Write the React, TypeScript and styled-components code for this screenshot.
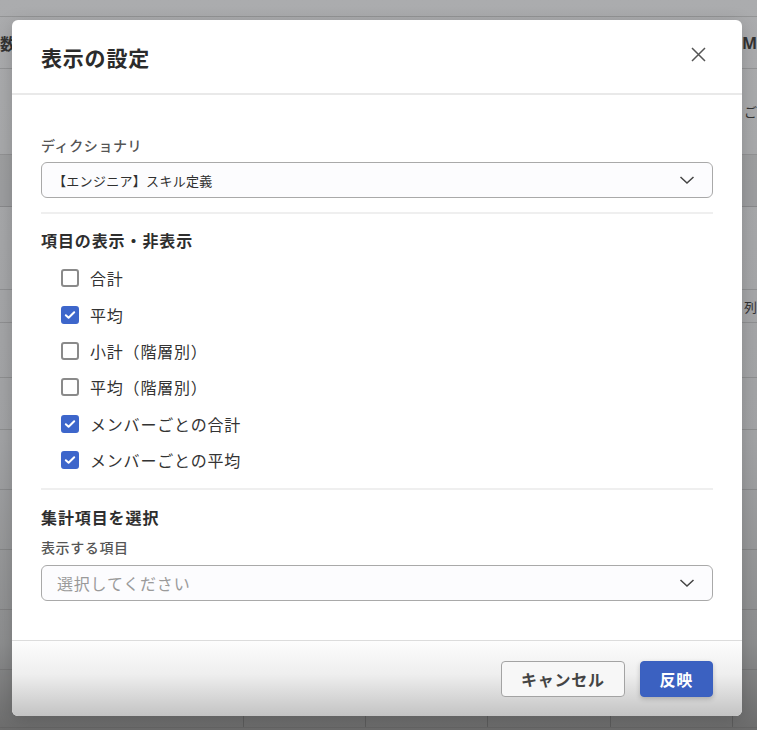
import styled, { createGlobalStyle } from "styled-components";

const GlobalStyle = createGlobalStyle`
  html, body {
    margin: 0;
    padding: 0;
  }
  body {
    font-family: "Noto Sans", "Noto Sans CJK JP", sans-serif;
    color: #333;
  }
`;

const Page = styled.div`
  position: relative;
  width: 757px;
  height: 730px;
  overflow: hidden;
  background: linear-gradient(#abacae 0%, #a2a3a5 60%, #8d8e8f 88%, #6c6c6c 100%);
`;

const BgTable = styled.div`
  display: flex;
  flex-direction: column;
`;

const BgRow = styled.div<{ $h: number; $dark?: boolean }>`
  height: ${(p) => p.$h}px;
  box-sizing: border-box;
  border-bottom: 1px solid rgba(80, 80, 80, 0.25);
  background: ${(p) => (p.$dark ? "rgba(0,0,0,0.06)" : "transparent")};
  display: flex;
  align-items: center;
  justify-content: space-between;
`;

const BgCell = styled.div<{ $w: number }>`
  width: ${(p) => p.$w}px;
  height: 100%;
  box-sizing: border-box;
  border-right: 1px solid rgba(60, 60, 60, 0.35);
`;

const BgText = styled.span<{ $small?: boolean }>`
  font-size: ${(p) => (p.$small ? 13 : 16)}px;
  font-weight: ${(p) => (p.$small ? 400 : 700)};
  white-space: nowrap;
  overflow: hidden;
  color: #333;
`;

const Overlay = styled.div`
  position: absolute;
  inset: 0;
  padding: 20px 0 0 12px;
`;

const Modal = styled.div`
  width: 730px;
  background: #fff;
  border-radius: 6px;
  overflow: hidden;
  box-shadow: 0 4px 18px rgba(0, 0, 0, 0.18);
`;

const Header = styled.div`
  height: 73px;
  padding: 0 29px;
  display: flex;
  align-items: center;
  justify-content: space-between;
  border-bottom: 2px solid #e9e9e9;
`;

const Title = styled.h2`
  margin: 0;
  font-size: 21px;
  font-weight: 700;
  color: #2b2b2b;
  letter-spacing: 0.8px;
`;

const CloseButton = styled.button`
  border: none;
  background: none;
  padding: 0;
  margin-right: 7px;
  width: 16px;
  height: 16px;
  display: flex;
  align-items: center;
  justify-content: center;
  margin-top: -4px;
`;

const Body = styled.div`
  padding: 41px 29px 39px;
`;

const FieldLabel = styled.div`
  font-size: 14px;
  line-height: 20px;
  font-weight: 500;
  color: #555;
  letter-spacing: 0.6px;
`;

const Select = styled.div<{ $placeholder?: boolean }>`
  margin-top: ${(p) => (p.$placeholder ? 7 : 6)}px;
  height: 36px;
  box-sizing: border-box;
  border: 1px solid #a9a9a9;
  border-radius: 6px;
  background: #fcfcfe;
  display: flex;
  align-items: center;
  justify-content: space-between;
  padding: 0 17px 0 ${(p) => (p.$placeholder ? 15 : 11)}px;
  font-size: ${(p) => (p.$placeholder ? 16 : 13)}px;
  letter-spacing: ${(p) => (p.$placeholder ? 0.8 : 0.3)}px;
  color: ${(p) => (p.$placeholder ? "#9a9a9a" : "#2f2f2f")};
`;

const Divider = styled.hr`
  border: none;
  height: 2px;
  background: #efefef;
  margin: 14px 0 15px;
`;

const SectionTitle = styled.h3<{ $gap: number }>`
  margin: 0 0 ${(p) => p.$gap}px;
  font-size: 16px;
  line-height: 24px;
  font-weight: 700;
  color: #2e2e2e;
  letter-spacing: 0.9px;
`;

const CheckList = styled.div`
  display: flex;
  flex-direction: column;
  padding-left: 20px;
`;

const CheckRow = styled.label`
  height: 36.4px;
  display: flex;
  align-items: center;
  gap: 11px;
  font-size: 16px;
  color: #333;
  letter-spacing: 0.8px;
`;

const Box = styled.span<{ $checked: boolean }>`
  width: 18px;
  height: 18px;
  box-sizing: border-box;
  border-radius: 3px;
  border: 2px solid ${(p) => (p.$checked ? "#3d66cb" : "#8a8a8a")};
  background: ${(p) => (p.$checked ? "#3d66cb" : "#fff")};
  display: flex;
  align-items: center;
  justify-content: center;
`;

const Footer = styled.div`
  border-top: 1px solid #dcdcdc;
  padding: 20px 29px 19px;
  display: flex;
  justify-content: flex-end;
  gap: 15px;
  background: linear-gradient(#fdfdfd 0%, #eeeeee 45%, #c3c3c3 100%);
`;

const Button = styled.button<{ $primary?: boolean }>`
  height: 36px;
  padding: 0 19px;
  border-radius: 4px;
  font-family: inherit;
  font-size: 16px;
  font-weight: 700;
  letter-spacing: 0.7px;
  border: 1px solid ${(p) => (p.$primary ? "#3a60c0" : "#a3a3a3")};
  background: ${(p) => (p.$primary ? "#3b61c1" : "#f7f7f7")};
  color: ${(p) => (p.$primary ? "#fff" : "#444")};
  box-shadow: ${(p) => (p.$primary ? "0 2px 5px rgba(0,0,0,0.2)" : "none")};
`;

const Chevron = () => (
  <svg width="16" height="10" viewBox="0 0 16 10">
    <path d="M1.5 2 L8 8 L14.5 2" fill="none" stroke="#444" strokeWidth="1.5" />
  </svg>
);

const CheckMark = () => (
  <svg width="12" height="10" viewBox="0 0 12 10">
    <path d="M1.8 5.2 L4.6 7.8 L10.2 2.2" fill="none" stroke="#fff" strokeWidth="2" strokeLinecap="round" strokeLinejoin="round" />
  </svg>
);

const items = [
  { label: "合計", checked: false },
  { label: "平均", checked: true },
  { label: "小計（階層別）", checked: false },
  { label: "平均（階層別）", checked: false },
  { label: "メンバーごとの合計", checked: true },
  { label: "メンバーごとの平均", checked: true },
];

const App = () => {
  return (
    <Page>
      <GlobalStyle />
      <BgTable>
        <BgRow $h={17} />
        <BgRow $h={52}>
          <BgText>数</BgText>
          <BgText>KM</BgText>
        </BgRow>
        <BgRow $h={86}>
          <span />
          <BgText $small>ご</BgText>
        </BgRow>
        <BgRow $h={52} $dark />
        <BgRow $h={83} />
        <BgRow $h={33}>
          <span />
          <BgText $small>列</BgText>
        </BgRow>
        <BgRow $h={55} />
        <BgRow $h={52} />
        <BgRow $h={60} />
        <BgRow $h={60} />
        <BgRow $h={60} />
        <BgRow $h={60} />
        <BgRow $h={58}>
          <BgCell $w={244} />
          <BgCell $w={122} />
          <BgCell $w={122} />
          <BgCell $w={123} />
          <BgCell $w={122} />
          <span style={{ flex: 1 }} />
        </BgRow>
      </BgTable>
      <Overlay>
        <Modal>
          <Header>
            <Title>表示の設定</Title>
            <CloseButton aria-label="閉じる">
              <svg width="15" height="15" viewBox="0 0 15 15">
                <path d="M1 1 L14 14 M14 1 L1 14" stroke="#555" strokeWidth="1.5" />
              </svg>
            </CloseButton>
          </Header>
          <Body>
            <FieldLabel>ディクショナリ</FieldLabel>
            <Select>
              <span>【エンジニア】スキル定義</span>
              <Chevron />
            </Select>
            <Divider />
            <SectionTitle $gap={7}>項目の表示・非表示</SectionTitle>
            <CheckList>
              {items.map((it) => (
                <CheckRow key={it.label}>
                  <Box $checked={it.checked}>{it.checked && <CheckMark />}</Box>
                  {it.label}
                </CheckRow>
              ))}
            </CheckList>
            <Divider style={{ margin: "10px 0 16px" }} />
            <SectionTitle $gap={8}>集計項目を選択</SectionTitle>
            <FieldLabel>表示する項目</FieldLabel>
            <Select $placeholder>
              <span>選択してください</span>
              <Chevron />
            </Select>
          </Body>
          <Footer>
            <Button>キャンセル</Button>
            <Button $primary>反映</Button>
          </Footer>
        </Modal>
      </Overlay>
    </Page>
  );
};

export default App;
